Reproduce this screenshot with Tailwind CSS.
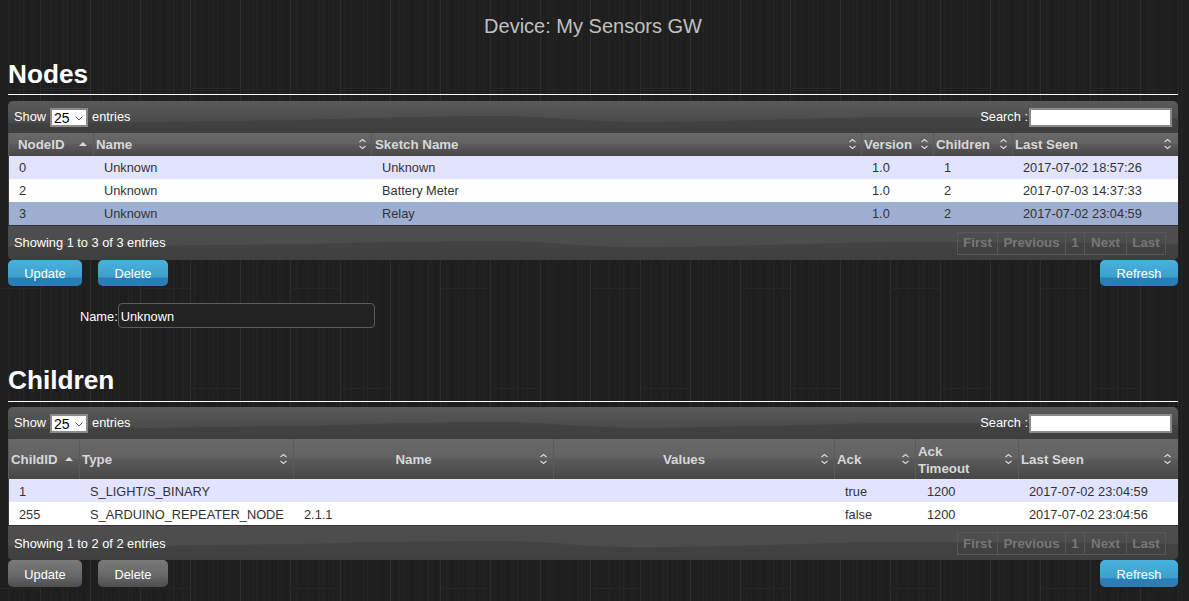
<!DOCTYPE html>
<html lang="en">
<head>
    <meta charset="UTF-8">
    <meta name="viewport" content="width=device-width, initial-scale=1.0">
    <title>Device: My Sensors GW</title>
    <script src="https://cdn.jsdelivr.net/npm/@tailwindcss/browser@4"></script>
</head>
<body class="relative h-[601px] overflow-hidden bg-[#1f1f1f] px-2 pr-[11px] font-['Liberation_Sans',Arial,sans-serif] text-[12.8px] text-white">

    <!-- wood background -->
    <svg class="absolute inset-0 h-full w-full" width="1189" height="601">
        <defs>
            <pattern id="wood" x="40" y="0" width="150" height="300" patternUnits="userSpaceOnUse">
                <g stroke-width="1" fill="none">
                    <path stroke="#232323" d="M4.500 0v300M11.500 0v300M23.500 0v300M37.500 0v300M58.500 0v300M66.500 0v300M79.500 0v300M91.500 0v300M106.500 0v300M118.500 0v300M129.500 0v300M143.500 0v300"/>
                    <path stroke="#1c1c1c" d="M8.500 0v300M17.500 0v300M30.500 0v300M44.500 0v300M54.500 0v300M72.500 0v300M85.500 0v300M96.500 0v300M112.500 0v300M124.500 0v300M137.500 0v300"/>
                    <path stroke="#252525" d="M27.500 0v300M63.500 0v300M88.500 0v300M133.500 0v300"/>
                    <path stroke="#2d2d2d" d="M.5 0v300M50.500 0v300M100.500 0v300"/>
                    <path stroke="#262626" d="M0 88.500h50M100 288.500h50"/>
                </g>
            </pattern>
        </defs>
        <rect width="1189" height="601" fill="url(#wood)"/>
    </svg>

    <div class="relative">
    <h2 class="h-[52px] pt-[14px] text-center text-[20px] leading-[24px] text-[#c0c0c0]">Device: My Sensors GW</h2>

    <!-- Nodes -->
    <h1 class="h-[43px] border-b border-white pt-[6px] text-[26.2px] leading-[32px] font-bold">Nodes</h1>
    <div class="mt-[6px] overflow-hidden rounded-[5px]">
        <div class="relative flex h-8 items-center justify-between bg-[linear-gradient(#5a5a5a_0%,#4b4b4b_60%,#474747_100%)] px-[6px]">
            <svg class="absolute inset-0 h-full w-full" viewBox="0 0 1170 32" preserveAspectRatio="none"><path d="M0 22C120 22 200 20 292 19C360 17 430 15 492 15C540 15 580 21 632 21C720 21 820 16 900 16C1000 16 1100 18 1170 18V32H0Z" fill="#000" fill-opacity=".12"/></svg>
            <div class="relative flex items-center">
                <span>Show</span>
                <div class="relative mx-1 h-[19px] w-[38px]">
                    <select class="h-[19px] w-[38px] appearance-none border-2 border-[#8a8a8a] bg-white pt-[1px] pl-[2px] text-[14px] leading-[14px] text-black">
                        <option>25</option>
                    </select>
                    <svg class="absolute top-[8px] left-[25px] h-[5px] w-[8px]" viewBox="0 0 8 5"><path d="M.5.5 4 4 7.500.5" fill="none" stroke="#555" stroke-width="1"/></svg>
                </div>
                <span>entries</span>
            </div>
            <div class="relative flex items-center">
                <span class="mr-px">Search :</span>
                <input type="text" class="h-[19px] w-[143px] border-2 border-[#8a8a8a] bg-white">
            </div>
        </div>
        <table class="w-full table-fixed border-collapse text-left">
            <colgroup>
                <col class="w-[85px]"><col class="w-[278px]"><col class="w-[490px]"><col class="w-[72px]"><col class="w-[79px]"><col>
            </colgroup>
            <thead class="bg-[linear-gradient(#686868_0%,#626262_48%,#5a5a5a_50%,#474747_100%)] text-[13.3px] font-bold text-[#d8d8d8]">
                <tr class="h-[23px]">
                    <th class="relative border-l border-[#5a5a5a] pl-[9px] font-bold">NodeID<svg class="absolute top-[8px] right-[5px] h-[6px] w-[10px]" viewBox="0 0 10 6"><path d="M1 5h8L5 1z" fill="#d8d8d8"/></svg></th>
                    <th class="relative border-l border-[#5a5a5a] pl-[2px] font-bold">Name<svg class="absolute top-[5px] right-[4px] h-[12px] w-[9px]" viewBox="0 0 9 12"><path d="M1.500 4 4.500 1.500 7.500 4M1.500 8 4.500 10.500 7.500 8" fill="none" stroke="#d8d8d8" stroke-width="1.200"/></svg></th>
                    <th class="relative border-l border-[#5a5a5a] pl-[3px] font-bold">Sketch Name<svg class="absolute top-[5px] right-[4px] h-[12px] w-[9px]" viewBox="0 0 9 12"><path d="M1.500 4 4.500 1.500 7.500 4M1.500 8 4.500 10.500 7.500 8" fill="none" stroke="#d8d8d8" stroke-width="1.200"/></svg></th>
                    <th class="relative border-l border-[#5a5a5a] pl-[2px] font-bold">Version<svg class="absolute top-[5px] right-[4px] h-[12px] w-[9px]" viewBox="0 0 9 12"><path d="M1.500 4 4.500 1.500 7.500 4M1.500 8 4.500 10.500 7.500 8" fill="none" stroke="#d8d8d8" stroke-width="1.200"/></svg></th>
                    <th class="relative border-l border-[#5a5a5a] pl-[2px] font-bold">Children<svg class="absolute top-[5px] right-[4px] h-[12px] w-[9px]" viewBox="0 0 9 12"><path d="M1.500 4 4.500 1.500 7.500 4M1.500 8 4.500 10.500 7.500 8" fill="none" stroke="#d8d8d8" stroke-width="1.200"/></svg></th>
                    <th class="relative border-l border-[#5a5a5a] pl-[2px] font-bold">Last Seen<svg class="absolute top-[5px] right-[6px] h-[12px] w-[9px]" viewBox="0 0 9 12"><path d="M1.500 4 4.500 1.500 7.500 4M1.500 8 4.500 10.500 7.500 8" fill="none" stroke="#d8d8d8" stroke-width="1.200"/></svg></th>
                </tr>
            </thead>
            <tbody class="text-[#333333]">
                <tr class="h-[23px] bg-[#e2e4ff]"><td class="border-l border-[#3a3a3a] pl-[10px]">0</td><td class="pl-[10.500px]">Unknown</td><td class="pl-[10.500px]">Unknown</td><td class="pl-[10.500px]">1.0</td><td class="pl-[10.500px]">1</td><td class="pl-[10.500px]">2017-07-02 18:57:26</td></tr>
                <tr class="h-[23px] bg-white"><td class="border-l border-[#3a3a3a] pl-[10px]">2</td><td class="pl-[10.500px]">Unknown</td><td class="pl-[10.500px]">Battery Meter</td><td class="pl-[10.500px]">1.0</td><td class="pl-[10.500px]">2</td><td class="pl-[10.500px]">2017-07-03 14:37:33</td></tr>
                <tr class="h-[23px] bg-[#9fafd1]"><td class="border-l border-[#3a3a3a] pl-[10px]">3</td><td class="pl-[10.500px]">Unknown</td><td class="pl-[10.500px]">Relay</td><td class="pl-[10.500px]">1.0</td><td class="pl-[10.500px]">2</td><td class="pl-[10.500px]">2017-07-02 23:04:59</td></tr>
            </tbody>
        </table>
        <div class="relative flex h-[35px] items-center justify-between border-t border-[#333] bg-[linear-gradient(#4e4e4e_0%,#4c4c4c_60%,#484848_100%)] pr-3 pl-[6px]">
            <svg class="absolute inset-0 h-full w-full" viewBox="0 0 1170 32" preserveAspectRatio="none"><path d="M0 19C120 19 200 18 292 17C360 15 430 14 492 14C540 14 580 20 632 20C720 20 820 15 900 15C1000 15 1100 16 1170 17V32H0Z" fill="#000" fill-opacity=".12"/></svg>
            <span class="relative">Showing 1 to 3 of 3 entries</span>
            <div class="relative flex h-[23px] items-stretch border border-[#585858] text-[13.3px] font-bold text-[#777777]">
                <span class="flex w-[40px] items-center justify-center border-r border-[#585858]">First</span>
                <span class="flex w-[68px] items-center justify-center border-r border-[#585858]">Previous</span>
                <span class="flex w-[19px] items-center justify-center border-r border-[#585858]">1</span>
                <span class="flex w-[42px] items-center justify-center border-r border-[#585858]">Next</span>
                <span class="flex w-[38px] items-center justify-center">Last</span>
            </div>
        </div>
    </div>
    <div class="flex h-[26px]">
        <button class="h-[26px] w-[74px] rounded-[5px] bg-[linear-gradient(#48b2dd_0%,#3d9fcd_65%,#2a7db5_70%,#2a7db5_100%)] pt-[2px]">Update</button>
        <button class="ml-4 h-[26px] w-[70px] rounded-[5px] bg-[linear-gradient(#48b2dd_0%,#3d9fcd_65%,#2a7db5_70%,#2a7db5_100%)] pt-[2px]">Delete</button>
        <button class="ml-auto h-[26px] w-[78px] rounded-[5px] bg-[linear-gradient(#48b2dd_0%,#3d9fcd_65%,#2a7db5_70%,#2a7db5_100%)] pt-[2px]">Refresh</button>
    </div>
    <div class="mt-[17px] flex h-[25px] items-center pl-[72px]">
        <label class="pt-[2px]">Name:</label>
        <input type="text" value="Unknown" class="h-[25px] w-[257px] rounded-[4px] border border-[#5c5c5c] bg-[#222222] pt-[2px] pl-[2px] text-white">
    </div>

    <!-- Children -->
    <h1 class="mt-[35px] h-[39px] border-b border-white pt-[1px] text-[26.2px] leading-[32px] font-bold">Children</h1>
    <div class="mt-[5px] overflow-hidden rounded-[5px]">
        <div class="relative flex h-8 items-center justify-between bg-[linear-gradient(#5a5a5a_0%,#4b4b4b_60%,#474747_100%)] px-[6px]">
            <svg class="absolute inset-0 h-full w-full" viewBox="0 0 1170 32" preserveAspectRatio="none"><path d="M0 22C120 22 200 20 292 19C360 17 430 15 492 15C540 15 580 21 632 21C720 21 820 16 900 16C1000 16 1100 18 1170 18V32H0Z" fill="#000" fill-opacity=".12"/></svg>
            <div class="relative flex items-center">
                <span>Show</span>
                <div class="relative mx-1 h-[19px] w-[38px]">
                    <select class="h-[19px] w-[38px] appearance-none border-2 border-[#8a8a8a] bg-white pt-[1px] pl-[2px] text-[14px] leading-[14px] text-black">
                        <option>25</option>
                    </select>
                    <svg class="absolute top-[8px] left-[25px] h-[5px] w-[8px]" viewBox="0 0 8 5"><path d="M.5.5 4 4 7.500.5" fill="none" stroke="#555" stroke-width="1"/></svg>
                </div>
                <span>entries</span>
            </div>
            <div class="relative flex items-center">
                <span class="mr-px">Search :</span>
                <input type="text" class="h-[19px] w-[143px] border-2 border-[#8a8a8a] bg-white">
            </div>
        </div>
        <table class="w-full table-fixed border-collapse text-left">
            <colgroup>
                <col class="w-[71px]"><col class="w-[214px]"><col class="w-[260px]"><col class="w-[281px]"><col class="w-[81px]"><col class="w-[103px]"><col>
            </colgroup>
            <thead class="bg-[linear-gradient(#686868_0%,#626262_48%,#5a5a5a_50%,#474747_100%)] text-[13.3px] leading-[17px] font-bold text-[#d8d8d8]">
                <tr class="h-[40px]">
                    <th class="relative border-l border-[#5a5a5a] pl-[2px] font-bold">ChildID<svg class="absolute top-[17px] right-[5px] h-[6px] w-[10px]" viewBox="0 0 10 6"><path d="M1 5h8L5 1z" fill="#d8d8d8"/></svg></th>
                    <th class="relative border-l border-[#5a5a5a] pl-[2px] font-bold">Type<svg class="absolute top-[14px] right-[5px] h-[12px] w-[9px]" viewBox="0 0 9 12"><path d="M1.500 4 4.500 1.500 7.500 4M1.500 8 4.500 10.500 7.500 8" fill="none" stroke="#d8d8d8" stroke-width="1.200"/></svg></th>
                    <th class="relative border-l border-[#5a5a5a] pr-[20px] text-center font-bold">Name<svg class="absolute top-[14px] right-[5px] h-[12px] w-[9px]" viewBox="0 0 9 12"><path d="M1.500 4 4.500 1.500 7.500 4M1.500 8 4.500 10.500 7.500 8" fill="none" stroke="#d8d8d8" stroke-width="1.200"/></svg></th>
                    <th class="relative border-l border-[#5a5a5a] pr-[20px] text-center font-bold">Values<svg class="absolute top-[14px] right-[5px] h-[12px] w-[9px]" viewBox="0 0 9 12"><path d="M1.500 4 4.500 1.500 7.500 4M1.500 8 4.500 10.500 7.500 8" fill="none" stroke="#d8d8d8" stroke-width="1.200"/></svg></th>
                    <th class="relative border-l border-[#5a5a5a] pl-[2px] font-bold">Ack<svg class="absolute top-[14px] right-[5px] h-[12px] w-[9px]" viewBox="0 0 9 12"><path d="M1.500 4 4.500 1.500 7.500 4M1.500 8 4.500 10.500 7.500 8" fill="none" stroke="#d8d8d8" stroke-width="1.200"/></svg></th>
                    <th class="relative border-l border-[#5a5a5a] pt-[2px] pl-[2px] font-bold">Ack<br>Timeout<svg class="absolute top-[14px] right-[5px] h-[12px] w-[9px]" viewBox="0 0 9 12"><path d="M1.500 4 4.500 1.500 7.500 4M1.500 8 4.500 10.500 7.500 8" fill="none" stroke="#d8d8d8" stroke-width="1.200"/></svg></th>
                    <th class="relative border-l border-[#5a5a5a] pl-[2px] font-bold">Last Seen<svg class="absolute top-[14px] right-[6px] h-[12px] w-[9px]" viewBox="0 0 9 12"><path d="M1.500 4 4.500 1.500 7.500 4M1.500 8 4.500 10.500 7.500 8" fill="none" stroke="#d8d8d8" stroke-width="1.200"/></svg></th>
                </tr>
            </thead>
            <tbody class="text-[#333333]">
                <tr class="h-[23px] bg-[#e2e4ff]"><td class="border-l border-[#3a3a3a] pt-[2px] pl-[10px]">1</td><td class="pt-[2px] pl-[10.500px]">S_LIGHT/S_BINARY</td><td class="pt-[2px] pl-[10.500px]"></td><td class="pt-[2px] pl-[10.500px]"></td><td class="pt-[2px] pl-[10.500px]">true</td><td class="pt-[2px] pl-[11.500px]">1200</td><td class="pt-[2px] pl-[10.500px]">2017-07-02 23:04:59</td></tr>
                <tr class="h-[23px] bg-white"><td class="border-l border-[#3a3a3a] pt-[2px] pl-[10px]">255</td><td class="pt-[2px] pl-[10.500px]">S_ARDUINO_REPEATER_NODE</td><td class="pt-[2px] pl-[10.500px]">2.1.1</td><td class="pt-[2px] pl-[10.500px]"></td><td class="pt-[2px] pl-[10.500px]">false</td><td class="pt-[2px] pl-[11.500px]">1200</td><td class="pt-[2px] pl-[10.500px]">2017-07-02 23:04:56</td></tr>
            </tbody>
        </table>
        <div class="relative flex h-[35px] items-center justify-between border-t border-[#333] bg-[linear-gradient(#4e4e4e_0%,#4c4c4c_60%,#484848_100%)] pr-3 pl-[6px]">
            <svg class="absolute inset-0 h-full w-full" viewBox="0 0 1170 32" preserveAspectRatio="none"><path d="M0 19C120 19 200 18 292 17C360 15 430 14 492 14C540 14 580 20 632 20C720 20 820 15 900 15C1000 15 1100 16 1170 17V32H0Z" fill="#000" fill-opacity=".12"/></svg>
            <span class="relative pt-[2px]">Showing 1 to 2 of 2 entries</span>
            <div class="relative flex h-[23px] items-stretch border border-[#585858] text-[13.3px] font-bold text-[#777777]">
                <span class="flex w-[40px] items-center justify-center border-r border-[#585858] pt-[2px]">First</span>
                <span class="flex w-[68px] items-center justify-center border-r border-[#585858] pt-[2px]">Previous</span>
                <span class="flex w-[19px] items-center justify-center border-r border-[#585858] pt-[2px]">1</span>
                <span class="flex w-[42px] items-center justify-center border-r border-[#585858] pt-[2px]">Next</span>
                <span class="flex w-[38px] items-center justify-center pt-[2px]">Last</span>
            </div>
        </div>
    </div>
    <div class="flex h-[27px]">
        <button class="h-[27px] w-[74px] rounded-[5px] bg-[linear-gradient(#7a7a7a_0%,#666666_60%,#4d4d4d_100%)] pt-[2px]">Update</button>
        <button class="ml-4 h-[27px] w-[70px] rounded-[5px] bg-[linear-gradient(#7a7a7a_0%,#666666_60%,#4d4d4d_100%)] pt-[2px]">Delete</button>
        <button class="ml-auto h-[27px] w-[78px] rounded-[5px] bg-[linear-gradient(#48b2dd_0%,#3d9fcd_65%,#2a7db5_70%,#2a7db5_100%)] pt-[2px]">Refresh</button>
    </div>
    </div>
</body>
</html>
